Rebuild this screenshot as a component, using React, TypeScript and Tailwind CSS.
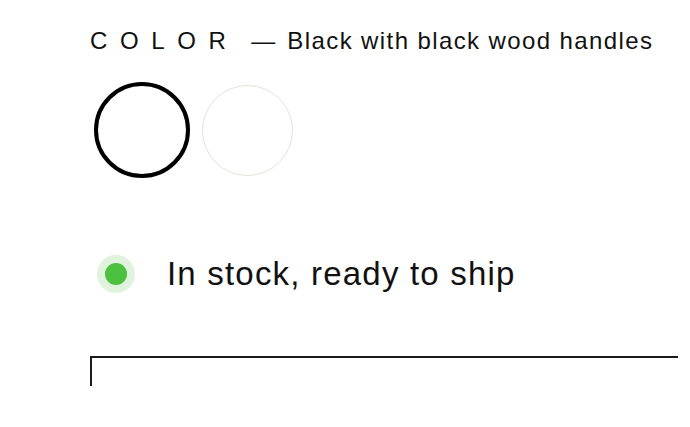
const swatches = [
  { name: "Black", selected: true },
  { name: "Natural", selected: false },
];

export default function App() {
  return (
    <div className="min-h-[427px] bg-white pl-[90px] pr-[12px] pt-[27px] font-['Liberation_Sans',Arial,sans-serif] text-[#111]">
      <div className="flex items-baseline text-[24px] leading-[28px]">
        <span className="tracking-[12.6px]">COLOR</span>
        <span className="ml-[13px]">—</span>
        <span className="ml-[12px] tracking-[1.4px]">Black with black wood handles</span>
      </div>

      <div className="mt-[27px] ml-[4px] flex items-center gap-[12px]">
        {swatches.map((s) =>
          s.selected ? (
            <button
              key={s.name}
              aria-label={s.name}
              className="h-[96px] w-[96px] rounded-full border-4 border-black bg-white"
            />
          ) : (
            <button
              key={s.name}
              aria-label={s.name}
              className="h-[91px] w-[91px] rounded-full border-[1.5px] border-[#e5e2dc] bg-white"
            />
          ),
        )}
      </div>

      <div className="mt-[77px] ml-[7px] flex items-center gap-[32px]">
        <span className="flex h-[38px] w-[38px] items-center justify-center rounded-full bg-[#e0f3dc]">
          <span className="h-[22px] w-[22px] rounded-full bg-[#4cc03f]" />
        </span>
        <span className="text-[33px] leading-[38px] tracking-[1.2px]">In stock, ready to ship</span>
      </div>

      <div className="mt-[63px] h-[30px] border-l-2 border-t-2 border-[#1a1a1a]" />
    </div>
  );
}
